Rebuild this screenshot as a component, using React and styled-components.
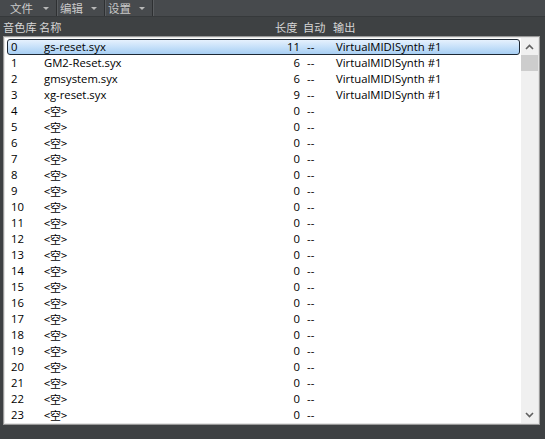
import React from "react";
import styled, { createGlobalStyle } from "styled-components";

const GlobalStyle = createGlobalStyle`
  html, body {
    margin: 0;
    padding: 0;
    background: #3e4143;
  }
  body {
    font-family: "Open Sans", "Noto Sans CJK SC", sans-serif;
  }
`;

const Window = styled.div`
  width: 545px;
  height: 439px;
  background: #3e4143;
  display: flex;
  flex-direction: column;
  overflow: hidden;
`;

// top menu bar
const MenuBar = styled.div`
  height: 16px;
  display: flex;
  background: #474a4d;
  border-bottom: 1px solid #36393b;
`;

const MenuItem = styled.div`
  display: flex;
  align-items: center;
  padding: 0 0 0 ${(p) => p.$pad}px;
  width: ${(p) => p.$w}px;
  box-sizing: border-box;
  border-right: 1px solid #2e3032;
  box-shadow: 1px 0 0 #5a5d60;
  color: #c9c9c9;
  font-family: "Noto Sans CJK SC", sans-serif;
  font-size: 11.5px;
  line-height: 16px;
`;

const Caret = styled.span`
  margin-left: auto;
  margin-right: 7px;
  width: 0;
  height: 0;
  border-left: 3px solid transparent;
  border-right: 3px solid transparent;
  border-top: 3px solid #b8b8b8;
`;

// column headings
const HeaderRow = styled.div`
  height: 19px;
  display: flex;
  align-items: center;
  color: #d6d6d6;
  font-family: "Noto Sans CJK SC", sans-serif;
  font-size: 11.2px;
  padding-left: 3px;
`;

const HeadCell = styled.span`
  width: ${(p) => p.$w}px;
  flex: none;
`;

// list box
const ListBox = styled.div`
  margin: 0 5px 0 3px;
  height: 389px;
  background: #ffffff;
  border: 1px solid #9a9a9a;
  box-shadow: inset 0 0 0 1px #e3e3e3;
  display: flex;
  padding: 1px;
  box-sizing: border-box;
`;

const Rows = styled.div`
  flex: 1;
  padding: 1px 0 0 2px;
  overflow: hidden;
`;

const Row = styled.div`
  height: 16px;
  display: flex;
  align-items: center;
  font-size: 11.3px;
  color: #000;
  box-sizing: border-box;
  margin-right: 1px;
  border-radius: 3px;
  border: 1px solid ${(p) => (p.$selected ? "#1d2733" : "transparent")};
  background: ${(p) =>
    p.$selected
      ? "linear-gradient(to bottom, #e6f1fd 0%, #c6e0f9 50%, #a8cff3 100%)"
      : "transparent"};
`;

const Cell = styled.span`
  flex: none;
  width: ${(p) => p.$w}px;
  padding-left: ${(p) => p.$pl || 0}px;
  text-align: ${(p) => p.$align || "left"};
  white-space: nowrap;
  box-sizing: border-box;
  line-height: 14px;
`;

const Empty = styled.span`
  font-family: "Noto Sans CJK SC", sans-serif;
  font-size: 11px;
`;

const ScrollBar = styled.div`
  width: 17px;
  flex: none;
  background: #f0f0f0;
  display: flex;
  flex-direction: column;
  align-items: center;
`;

const ArrowBtn = styled.div`
  height: 17px;
  width: 17px;
  display: flex;
  align-items: center;
  justify-content: center;
`;

const Thumb = styled.div`
  width: 17px;
  height: 16px;
  background: #cdcdcd;
`;

const Track = styled.div`
  flex: 1;
`;

const Chevron = ({ up }) => (
  <svg width="9" height="6" viewBox="0 0 9 6">
    <path
      d={up ? "M1 5 L4.5 1.5 L8 5" : "M1 1 L4.5 4.5 L8 1"}
      fill="none"
      stroke="#606060"
      strokeWidth="1.6"
    />
  </svg>
);

const files = [
  { name: "gs-reset.syx", len: 11, out: "VirtualMIDISynth #1" },
  { name: "GM2-Reset.syx", len: 6, out: "VirtualMIDISynth #1" },
  { name: "gmsystem.syx", len: 6, out: "VirtualMIDISynth #1" },
  { name: "xg-reset.syx", len: 9, out: "VirtualMIDISynth #1" },
];

const rows = Array.from({ length: 24 }, (_, i) => files[i] || { name: null, len: 0, out: "" });

function App() {
  return (
    <Window>
      <GlobalStyle />
      <MenuBar>
        <MenuItem $w={57} $pad={10}>
          文件<Caret />
        </MenuItem>
        <MenuItem $w={48} $pad={3}>
          编辑<Caret />
        </MenuItem>
        <MenuItem $w={48} $pad={3}>
          设置<Caret />
        </MenuItem>
      </MenuBar>
      <HeaderRow>
        <HeadCell $w={36}>音色库</HeadCell>
        <HeadCell $w={236}>名称</HeadCell>
        <HeadCell $w={28}>长度</HeadCell>
        <HeadCell $w={30}>自动</HeadCell>
        <HeadCell $w={40}>输出</HeadCell>
      </HeaderRow>
      <ListBox>
        <Rows>
          {rows.map((r, i) => (
            <Row key={i} $selected={i === 0}>
              <Cell $w={36} $pl={3}>
                {i}
              </Cell>
              <Cell $w={220}>{r.name ? r.name : <Empty>&lt;空&gt;</Empty>}</Cell>
              <Cell $w={36} $align="right">
                {r.len}
              </Cell>
              <Cell $w={36} $pl={7}>
                --
              </Cell>
              <Cell $w={180}>{r.out}</Cell>
            </Row>
          ))}
        </Rows>
        <ScrollBar>
          <ArrowBtn>
            <Chevron up />
          </ArrowBtn>
          <Thumb />
          <Track />
          <ArrowBtn>
            <Chevron />
          </ArrowBtn>
        </ScrollBar>
      </ListBox>
    </Window>
  );
}

export default App;
